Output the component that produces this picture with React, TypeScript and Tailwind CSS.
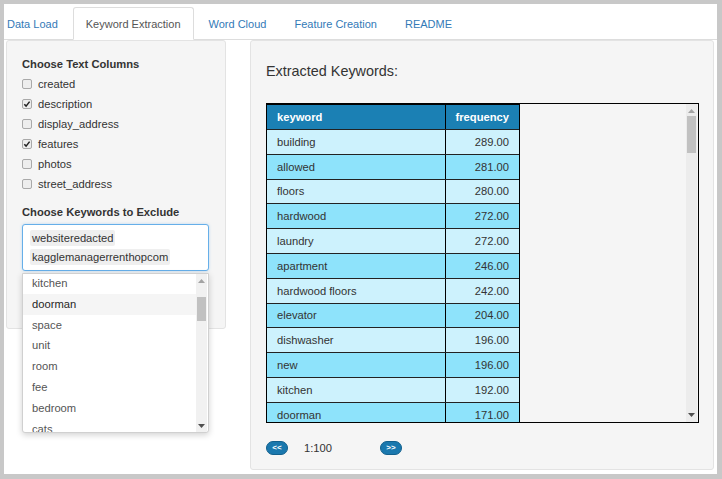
import React from "react";

const rows: [string, string][] = [
  ["building", "289.00"],
  ["allowed", "281.00"],
  ["floors", "280.00"],
  ["hardwood", "272.00"],
  ["laundry", "272.00"],
  ["apartment", "246.00"],
  ["hardwood floors", "242.00"],
  ["elevator", "204.00"],
  ["dishwasher", "196.00"],
  ["new", "196.00"],
  ["kitchen", "192.00"],
  ["doorman", "171.00"],
];

const columns: [string, boolean][] = [
  ["created", false],
  ["description", true],
  ["display_address", false],
  ["features", true],
  ["photos", false],
  ["street_address", false],
];

const options = ["kitchen", "doorman", "space", "unit", "room", "fee", "bedroom", "cats"];

function Up() {
  return (
    <svg width="7" height="4" viewBox="0 0 7 4">
      <path d="M0 4 L3.5 0 L7 4 Z" fill="#a3a3a3" />
    </svg>
  );
}
function Down() {
  return (
    <svg width="7" height="4" viewBox="0 0 7 4">
      <path d="M0 0 L3.5 4 L7 0 Z" fill="#505050" />
    </svg>
  );
}

function Checkbox({ checked }: { checked: boolean }) {
  return (
    <div className="w-[10px] h-[10px] rounded-[2px] border border-[#a9a9a9] bg-[#ededed] flex items-center justify-center">
      {checked && (
        <svg width="8" height="8" viewBox="0 0 8 8">
          <path d="M1.3 4.2 L3.1 6.1 L6.6 1.6" stroke="#222" strokeWidth="1.5" fill="none" />
        </svg>
      )}
    </div>
  );
}

export default function App() {
  const tabs = ["Data Load", "Keyword Extraction", "Word Cloud", "Feature Creation", "README"];
  return (
    <div
      className="w-[722px] h-[479px] bg-[#c8c8c8] pl-[4px] pt-[4px] pr-[5px] pb-[5px] overflow-hidden"
      style={{ fontFamily: '"Liberation Sans", Arial, sans-serif' }}
    >
      <div className="w-full h-full bg-white text-[#333] text-[11.2px] leading-[16px]">
        {/* tabs */}
        <div className="pt-[3px]">
          <div className="flex border-b border-[#ddd] h-[33px] text-[11px]">
            {tabs.map((t, i) => {
              const active = i === 1;
              return (
                <div
                  key={t}
                  className={
                    "h-[33px] mr-[2px] flex items-center border rounded-t-[3px] " +
                    (i === 0 ? "pl-[2px] pr-[12px] " : "px-[12px] ") +
                    (active
                      ? "bg-white border-[#ddd] border-b-transparent text-[#555]"
                      : "border-transparent text-[#337ab7]")
                  }
                >
                  {t}
                </div>
              );
            })}
          </div>
        </div>

        <div className="flex pl-[2px]">
          {/* left well */}
          <div className="w-[220px] h-[289px] bg-[#f5f5f5] border border-[#e3e3e3] rounded-[3px] pt-[15px] px-[15px] shrink-0">
            <div className="font-bold">Choose Text Columns</div>
            <div className="mt-[2px]">
              {columns.map(([c, ch]) => (
                <div key={c} className="h-[20px] flex items-center gap-[6px]">
                  <Checkbox checked={ch} />
                  <span>{c}</span>
                </div>
              ))}
            </div>
            <div className="font-bold mt-[10px]">Choose Keywords to Exclude</div>
            <div className="relative mt-[4px] w-[187px]">
              <div className="h-[47px] bg-white border border-[#66afe9] rounded-[3px] pl-[7px] pt-[5px] shadow-[0_0_3px_rgba(102,175,233,0.4)]">
                <div className="flex">
                  <span className="bg-[#efefef] px-[2px] h-[16px] leading-[16px] rounded-[2px]">websiteredacted</span>
                </div>
                <div className="flex mt-[3px]">
                  <span className="bg-[#efefef] px-[2px] h-[16px] leading-[16px] rounded-[2px]">kagglemanagerrenthopcom</span>
                </div>
              </div>
              <div className="absolute left-0 top-[49px] w-[187px] h-[160px] bg-white border border-[#d0d0d0] rounded-b-[3px] shadow-[0_2px_6px_rgba(0,0,0,0.18)] overflow-hidden flex z-10">
                <div className="flex-1 -mt-[1px]">
                  {options.map((o, i) => (
                    <div
                      key={o}
                      className={
                        "h-[20.8px] leading-[20.8px] pl-[9px] " +
                        (i === 1 ? "bg-[#f5f5f5] text-[#262626]" : "text-[#555]")
                      }
                    >
                      {o}
                    </div>
                  ))}
                </div>
                <div className="w-[11px] bg-[#f1f1f1] relative mr-[1px]">
                  <div className="absolute left-[2px] top-[5px]"><Up /></div>
                  <div className="absolute left-[1px] top-[23px] w-[9px] h-[24px] bg-[#c1c1c1]" />
                  <div className="absolute left-[2px] bottom-[4px]"><Down /></div>
                </div>
              </div>
            </div>
          </div>

          {/* right panel */}
          <div className="ml-[24px] w-[464px] h-[430px] bg-[#f5f5f5] border border-[#e3e3e3] rounded-[3px] pt-[15px] px-[15px]">
            <div className="mt-[7px] text-[14.4px] leading-[16px]">Extracted Keywords:</div>
            <div className="mt-[24px] w-[433px] h-[320px] border border-black flex overflow-hidden">
              <div className="flex-1 overflow-hidden">
                <div className="w-[253px] border-t border-r border-black">
                  <div className="flex h-[24px] bg-[#1b80b4] text-white font-bold">
                    <div className="w-[179px] border-r border-black px-[10px] flex items-center">keyword</div>
                    <div className="w-[73px] px-[10px] flex items-center justify-end">frequency</div>
                  </div>
                  {rows.map(([k, f], i) => (
                    <div
                      key={k}
                      className={
                        "flex h-[24.8px] border-t border-[#222] " +
                        (i % 2 === 0 ? "bg-[#cdf2fd]" : "bg-[#8ee3fb]")
                      }
                    >
                      <div className="w-[179px] border-r border-black px-[10px] flex items-center">{k}</div>
                      <div className="w-[73px] px-[10px] flex items-center justify-end">{f}</div>
                    </div>
                  ))}
                </div>
              </div>
              <div className="w-[11px] bg-[#ececec] relative mr-[1px]">
                <div className="absolute left-[2px] top-[5px]"><Up /></div>
                <div className="absolute left-[1px] top-[12px] w-[9px] h-[37px] bg-[#c1c1c1]" />
                <div className="absolute left-[2px] bottom-[5px]"><Down /></div>
              </div>
            </div>
            <div className="mt-[18px] flex items-center h-[14px]">
              <div className="w-[22px] h-[14px] rounded-full bg-[#1a78ae] border border-[#12608d] text-white text-[8px] font-bold flex items-center justify-center leading-none">
                &lt;&lt;
              </div>
              <div className="ml-[16px] w-[76px]">1:100</div>
              <div className="w-[22px] h-[14px] rounded-full bg-[#1a78ae] border border-[#12608d] text-white text-[8px] font-bold flex items-center justify-center leading-none">
                &gt;&gt;
              </div>
            </div>
          </div>
        </div>
      </div>
    </div>
  );
}
